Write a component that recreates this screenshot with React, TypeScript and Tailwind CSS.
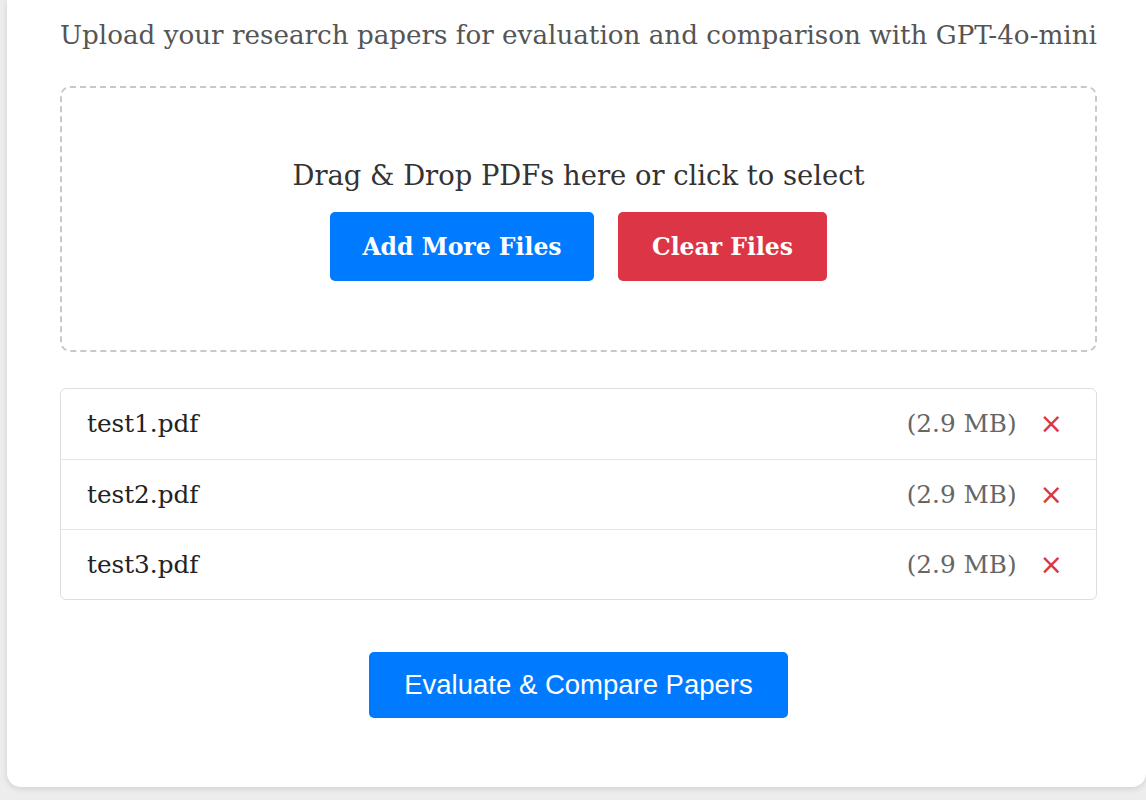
const files = [
  { name: "test1.pdf", size: "2.9 MB" },
  { name: "test2.pdf", size: "2.9 MB" },
  { name: "test3.pdf", size: "2.9 MB" },
];

const serif = "font-['DejaVu_Serif',_'Liberation_Serif',_serif]";

const App = () => {
  return (
    <div className="h-[800px] w-[1146px] overflow-hidden bg-[#ededed]">
      <div className="ml-[7px] flex h-[787px] w-[1139px] flex-col rounded-b-[14px] bg-white pl-[53px] pr-[49px] shadow-[0_2px_6px_rgba(0,0,0,0.12)]">
        {/* Title */}
        <p className={`${serif} pt-[17px] text-[26.2px] leading-[36px] text-[#555]`}>
          Upload your research papers for evaluation and comparison with GPT-4o-mini
        </p>

        {/* Drop zone */}
        <div className="mt-[33px] flex h-[266px] flex-col items-center justify-center rounded-[10px] border-2 border-dashed border-[#c8c8c8]">
          <p className={`${serif} text-[27.4px] leading-[36px] text-[#333]`}>
            Drag &amp; Drop PDFs here or click to select
          </p>
          <div className="mt-[18px] flex gap-[24px]">
            <button
              className={`${serif} h-[69px] w-[264px] rounded-[5px] bg-[#007bff] pt-[4px] text-[23.5px] font-bold text-white`}
            >
              Add More Files
            </button>
            <button
              className={`${serif} h-[69px] w-[209px] rounded-[5px] bg-[#dc3545] pt-[4px] text-[23.5px] font-bold text-white`}
            >
              Clear Files
            </button>
          </div>
        </div>

        {/* File list */}
        <ul className="mt-[36px] rounded-[6px] border border-[#dedede]">
          {files.map((file, idx) => (
            <li
              key={idx}
              className={`flex h-[70px] items-center pl-[26px] pr-[33px] ${idx > 0 ? "border-t border-[#e6e6e6]" : ""}`}
            >
              <span className={`${serif} flex-1 text-[24.7px] text-[#222]`}>{file.name}</span>
              <span className={`${serif} text-[24.7px] text-[#666]`}>({file.size})</span>
              <span className="ml-[23px] text-[28px] leading-none text-[#dc3545] font-['DejaVu_Sans',_sans-serif]">
                ×
              </span>
            </li>
          ))}
        </ul>

        {/* Submit */}
        <div className="mt-[52px] flex justify-center">
          <button className="h-[66px] w-[419px] rounded-[5px] bg-[#007bff] font-['Liberation_Sans',_Arial,_sans-serif] text-[27.5px] text-white">
            Evaluate &amp; Compare Papers
          </button>
        </div>
      </div>
    </div>
  );
};

export default App;
